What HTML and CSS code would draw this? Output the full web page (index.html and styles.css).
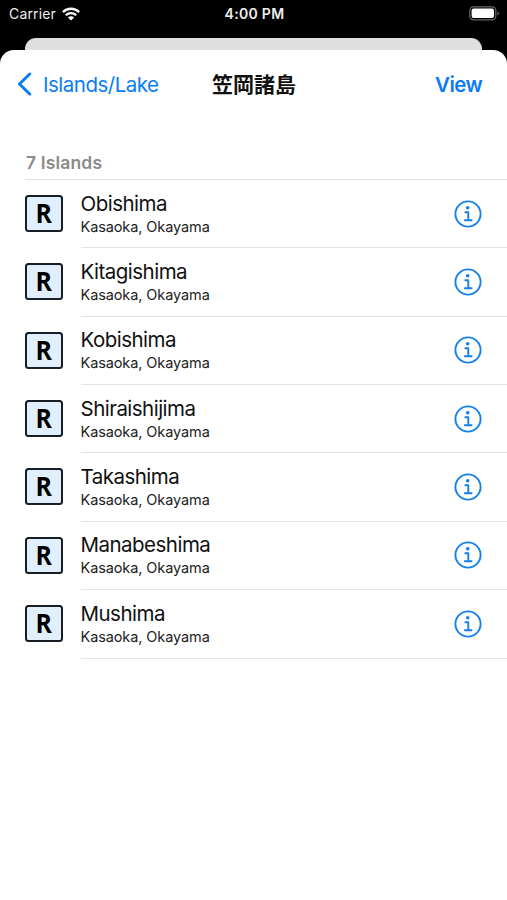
FILE: index.html
```html
<!DOCTYPE html>
<html lang="en">
<head>
<meta charset="utf-8">
<meta name="viewport" content="width=device-width">
<title>笠岡諸島</title>
<link rel="stylesheet" href="styles.css">
</head>
<body>
<svg class="defs" aria-hidden="true">
  <symbol id="info" viewBox="0 0 28 28">
    <circle cx="14" cy="14" r="12.6" fill="none" stroke="currentColor" stroke-width="1.9"/>
    <circle cx="13.7" cy="7.7" r="1.8" fill="currentColor"/>
    <path d="M11.3 12.2h3v7.6M10.8 20.2h6.8" fill="none" stroke="currentColor" stroke-width="1.9" stroke-linecap="round" stroke-linejoin="round"/>
  </symbol>
</svg>
<header class="status">
  <div class="carrier"><span>Carrier</span>
    <svg class="wifi" viewBox="0 0 18 14"><g fill="none" stroke="#fff" stroke-width="2.3"><path d="M.9 5.1a11.5 11.5 0 0 1 16.2 0"/><path d="M3.8 8.3a7.4 7.4 0 0 1 10.4 0"/></g><path d="M9 13.6 5.9 10.5a4.4 4.4 0 0 1 6.2 0z" fill="#fff"/></svg>
  </div>
  <div class="time">4:00 PM</div>
  <svg class="battery" viewBox="0 0 31 15"><rect x=".8" y=".8" width="26" height="13" rx="3.6" fill="none" stroke="#666" stroke-width="1.2"/><rect x="2.6" y="2.6" width="22.4" height="9.4" rx="2" fill="#fff"/><path d="M28.4 5.2v4.4c2-.9 2-3.5 0-4.4z" fill="#666"/></svg>
</header>
<div class="behind"></div>
<main class="sheet">
  <nav class="nav">
    <a class="back"><svg viewBox="0 0 15 24"><path d="M12.7 2 2.5 12l10.2 10" fill="none" stroke="currentColor" stroke-width="3" stroke-linecap="round" stroke-linejoin="round"/></svg><span>Islands/Lake</span></a>
    <h1>笠岡諸島</h1>
    <a class="view">View</a>
  </nav>
  <h2>7 Islands</h2>
  <ul class="list">
    <li><span class="badge"><b>R</b></span><div class="cell"><div class="text"><p class="name">Obishima</p><p class="place">Kasaoka, Okayama</p></div><svg class="info"><use href="#info"/></svg></div></li>
    <li><span class="badge"><b>R</b></span><div class="cell"><div class="text"><p class="name">Kitagishima</p><p class="place">Kasaoka, Okayama</p></div><svg class="info"><use href="#info"/></svg></div></li>
    <li><span class="badge"><b>R</b></span><div class="cell"><div class="text"><p class="name">Kobishima</p><p class="place">Kasaoka, Okayama</p></div><svg class="info"><use href="#info"/></svg></div></li>
    <li><span class="badge"><b>R</b></span><div class="cell"><div class="text"><p class="name">Shiraishijima</p><p class="place">Kasaoka, Okayama</p></div><svg class="info"><use href="#info"/></svg></div></li>
    <li><span class="badge"><b>R</b></span><div class="cell"><div class="text"><p class="name">Takashima</p><p class="place">Kasaoka, Okayama</p></div><svg class="info"><use href="#info"/></svg></div></li>
    <li><span class="badge"><b>R</b></span><div class="cell"><div class="text"><p class="name">Manabeshima</p><p class="place">Kasaoka, Okayama</p></div><svg class="info"><use href="#info"/></svg></div></li>
    <li><span class="badge"><b>R</b></span><div class="cell"><div class="text"><p class="name">Mushima</p><p class="place">Kasaoka, Okayama</p></div><svg class="info"><use href="#info"/></svg></div></li>
  </ul>
</main>
</body>
</html>
```
FILE: styles.css
```css
* { box-sizing: border-box; margin: 0; padding: 0; }
body {
  height: 900px;
  display: flex;
  flex-direction: column;
  overflow: hidden;
  background: #000;
  color: #111;
  font-family: Inter, "Noto Sans CJK JP", sans-serif;
}
.defs { display: none; }
.status {
  height: 38px;
  padding: 0 7px 11px 9px;
  display: grid;
  grid-template-columns: 1fr auto 1fr;
  align-items: center;
  color: #eee;
  font-size: 14px;
  line-height: 18px;
}
.carrier { display: flex; align-items: center; gap: 6px; letter-spacing: .15px; }
.wifi { width: 18px; height: 14px; }
.time { font-weight: 600; letter-spacing: .3px; }
.battery { width: 31px; height: 15px; justify-self: end; }
.behind {
  flex: none;
  height: 12px;
  margin: 0 25px;
  border-radius: 11px 11px 0 0;
  background: #dfdfdf;
}
.sheet {
  flex: 1;
  background: #fff;
  border-radius: 14px 14px 0 0;
}
.nav {
  height: 68px;
  padding: 0 25px 0 17px;
  display: grid;
  grid-template-columns: 195px auto 1fr;
  align-items: center;
  color: #0a7cf5;
}
.back { display: flex; align-items: center; gap: 11px; font-size: 20.5px; letter-spacing: -.5px; }
.back svg { width: 15px; height: 24px; }
h1 { padding-bottom: 2px; color: #111; font: 700 21px/28px "Noto Sans CJK JP", sans-serif; }
.view { justify-self: end; font-size: 20.5px; font-weight: 600; letter-spacing: -.6px; }
h2 {
  height: 61px;
  padding: 34px 0 0 26px;
  color: #8b8b8b;
  font-size: 17.5px;
  line-height: 22px;
  font-weight: 600;
  letter-spacing: .15px;
}
.list { list-style: none; }
.list::before {
  content: "";
  display: block;
  height: 1px;
  margin-left: 25px;
  background: #e2e2e2;
}
li { height: 68.37px; display: flex; align-items: center; padding-left: 25px; }
.badge {
  width: 37.5px;
  height: 37px;
  margin-bottom: 1.4px;
  display: grid;
  place-items: center;
  border: 2px solid #171e24;
  border-radius: 3.5px;
  background: #e1effd;
  color: #000;
}
.badge b {
  font: 700 27px/33px "Open Sans", sans-serif;
  transform: translate(-.3px, -1.3px) scaleX(.92);
}
.cell {
  flex: 1;
  height: 100%;
  margin-left: 18px;
  padding-right: 25px;
  display: flex;
  align-items: center;
  justify-content: space-between;
  border-bottom: 1px solid #e4e4e4;
}
.name { font-size: 20.5px; line-height: 25px; letter-spacing: -.52px; }
.place { padding-top: 1px; font-size: 14.5px; line-height: 20px; letter-spacing: -.1px; color: #222; }
.info { width: 28px; height: 28px; color: #1580ea; }
```
